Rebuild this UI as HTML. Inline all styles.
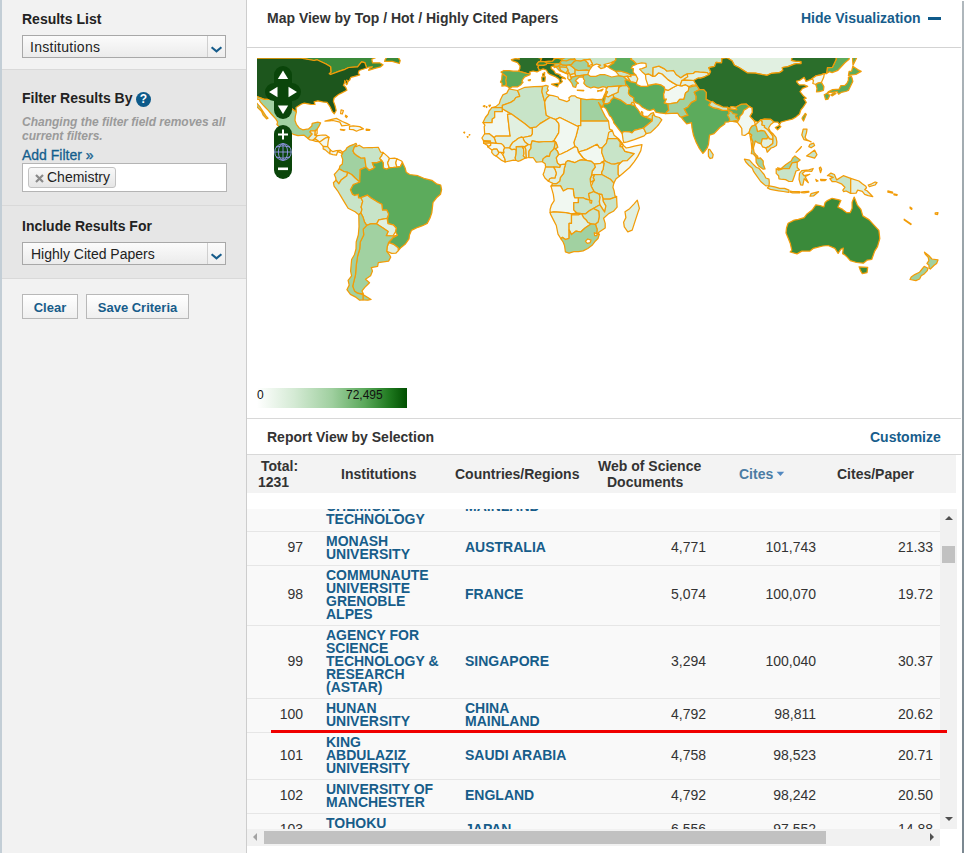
<!DOCTYPE html>
<html><head><meta charset="utf-8">
<style>
*{box-sizing:border-box;margin:0;padding:0}
html,body{width:964px;height:853px;overflow:hidden;background:#fff;font-family:"Liberation Sans",sans-serif;color:#333}
.a{position:absolute}
#side{position:absolute;left:0;top:0;width:247px;height:853px;background:#f2f2f2;border-right:1px solid #cdcdcd}
.lb{position:absolute;left:0;top:0;width:2px;height:853px;background:#c3ced6}
.sec{position:absolute;left:2px;width:244px;background:#e6e6e6}
.h{position:absolute;left:22px;font-weight:bold;font-size:14px;line-height:16px;color:#222;white-space:nowrap}
.sel{position:absolute;left:22px;width:204px;height:23px;border:1px solid #a8a8a8;background:linear-gradient(#fbfbfb,#ebebeb)}
.sel span{position:absolute;left:8px;top:3px;font-size:14px;line-height:16px;color:#222;white-space:nowrap}
.sel i{position:absolute;left:184px;top:0;width:18px;height:21px;border-left:1px solid #cfcfcf;background:linear-gradient(#fbfbfb,#eeeeee)}
.sel i svg{position:absolute;left:2px;top:9px}
.btn{position:absolute;top:294px;height:25px;border:1px solid #b8b8b8;background:linear-gradient(#ffffff,#efefef);font-size:13px;font-weight:bold;color:#175c8a;text-align:center;line-height:24px;padding-top:1px}
.lnk{position:absolute;color:#175d8c;font-weight:bold;font-size:14px;line-height:16px;white-space:nowrap}
.t1{position:absolute;font-weight:bold;font-size:14px;line-height:16px;color:#333;white-space:nowrap}
#map{position:absolute;left:257px;top:58px;width:700px;height:350px;overflow:hidden}
#map svg.m path{stroke:#f29c08;stroke-width:1.25;stroke-linejoin:round}
#body{position:absolute;left:247px;top:509px;width:693px;height:320px;overflow:hidden}
.row{position:absolute;left:0;width:693px;background:#f9f9f9;border-bottom:1px solid #e6e6e6}
.c{position:absolute;top:-1px;bottom:1px;display:flex;align-items:center;white-space:nowrap}
.ci{font-weight:bold;font-size:14px;line-height:13px;color:#175d8a}
.cr{font-size:14px;line-height:16px;color:#333;text-align:right;margin-top:-1px}
.hd{position:absolute;font-weight:bold;font-size:14px;line-height:16px;color:#333;white-space:nowrap}
</style></head><body>
<div id="side">
  <div class="lb"></div>
  <div class="h" style="top:11px">Results List</div>
  <div class="sel" style="top:35px"><span style="left:7px;letter-spacing:0.28px">Institutions</span><i><svg width="13" height="8" viewBox="0 0 13 8"><path d="M1.6 2.2 L6.5 6.3 L11.4 2.2" fill="none" stroke="#165c8b" stroke-width="2.1"/></svg></i></div>
  <div class="sec" style="top:69px;height:137px;border-top:1px solid #d9d9d9;border-bottom:1px solid #d9d9d9"></div>
  <div class="h" style="top:90px">Filter Results By</div>
  <div class="a" style="left:136px;top:92px;width:15px;height:15px;border-radius:50%;background:#0d5a8a;color:#fff;font-weight:bold;font-size:12px;line-height:15px;text-align:center">?</div>
  <div class="a" style="left:22px;top:115px;font-style:italic;font-weight:bold;font-size:12px;line-height:14px;color:#9a9a9a;white-space:nowrap">Changing the filter field removes all<br>current filters.</div>
  <div class="a" style="left:22px;top:147px;font-size:14px;line-height:16px;color:#145e8d;-webkit-text-stroke:0.3px #145e8d;white-space:nowrap">Add Filter »</div>
  <div class="a" style="left:22px;top:163px;width:205px;height:29px;background:#fff;border:1px solid #b4b4b4"></div>
  <div class="a" style="left:28px;top:167px;width:88px;height:21px;border:1px solid #c2c2c2;border-radius:3px;background:linear-gradient(#f8f8f8,#e6e6e6)"></div>
  <svg class="a" style="left:35px;top:173.5px" width="9" height="9" viewBox="0 0 9 9"><path d="M1 1L8 8M8 1L1 8" stroke="#8a8a8a" stroke-width="2.2"/></svg>
  <div class="a" style="left:47px;top:169px;font-size:14px;line-height:16px;color:#222">Chemistry</div>
  <div class="sec" style="top:206px;height:73px;border-bottom:1px solid #d9d9d9"></div>
  <div class="h" style="top:218px">Include Results For</div>
  <div class="sel" style="top:242px"><span>Highly Cited Papers</span><i><svg width="13" height="8" viewBox="0 0 13 8"><path d="M1.6 2.2 L6.5 6.3 L11.4 2.2" fill="none" stroke="#165c8b" stroke-width="2.1"/></svg></i></div>
  <div class="btn" style="left:22px;width:56px">Clear</div>
  <div class="btn" style="left:86px;width:103px">Save Criteria</div>
</div>

<div class="a" style="left:962px;top:1px;width:2px;height:852px;background:linear-gradient(#b0b8bd,#95a0a6 35%,#7b8891 85%,#7b8891)"></div>
<div class="t1" style="left:267px;top:10px">Map View by Top / Hot / Highly Cited Papers</div>
<div class="lnk" style="left:801px;top:10px">Hide Visualization</div>
<div class="a" style="left:928px;top:17px;width:13px;height:3px;background:#0f5a8a"></div>
<div class="a" style="left:247px;top:47px;width:714px;height:1px;background:#d3d3d3"></div>

<div id="map">
<svg class="m" width="700" height="350" viewBox="257 58 700 350" style="position:absolute;left:0;top:0">
<path fill="#3a8a3a" d="M229.4 58.2L236.4 58.2L301.1 58.2L314.1 60.5L316.9 59.8L326.0 64.0L330.6 66.8L330.9 72.1L329.2 73.8L330.6 74.5L338.8 71.4L345.0 69.3L348.8 67.5L357.6 66.8L361.6 61.9L364.8 62.6L366.7 68.0L369.0 67.0L372.5 66.8L369.5 68.4L368.6 70.3L374.8 68.4L380.7 66.8L383.0 64.7L379.5 62.8L372.5 62.8L371.8 59.3L380.7 55.4L387.6 52.4L392.3 48.9L229.4 48.9Z"/>
<path fill="#3a8a3a" d="M384.6 61.4L392.3 61.4L399.3 63.5L400.2 60.5L398.1 57.2L393.5 55.8L392.3 52.1L388.8 54.7L385.3 59.3Z"/>
<path fill="#1d561d" d="M232.4 59.6L234.1 64.5L233.8 72.1L233.6 78.2L236.4 83.8L237.8 85.6L242.0 91.7L246.9 93.1L250.1 96.6L255.7 96.1L264.3 99.4L270.8 99.4L274.8 98.2L279.4 103.3L282.9 104.7L286.6 102.9L291.1 108.2L296.4 111.9L296.0 107.5L301.5 104.0L304.3 103.1L310.8 104.3L315.0 104.5L314.1 101.9L317.8 100.8L322.7 101.9L327.1 102.4L330.2 107.0L332.5 111.9L334.3 113.8L336.2 110.5L335.0 105.6L333.4 101.2L334.1 98.0L338.5 94.5L341.3 93.1L346.9 90.3L345.7 87.3L344.8 86.3L343.4 85.4L344.4 83.3L344.8 80.5L345.7 82.4L346.4 84.7L347.4 83.8L347.8 81.9L346.7 80.1L348.3 81.4L349.9 79.8L350.4 78.2L350.9 77.3L357.4 75.6L359.7 74.9L358.3 73.1L359.2 70.5L366.7 68.0L364.8 62.6L361.6 61.9L357.6 66.8L348.8 67.5L345.0 69.3L338.8 71.4L330.6 74.5L329.2 73.8L330.9 72.1L330.6 66.8L326.0 64.0L316.9 59.8L314.1 60.5L301.1 58.2L236.4 58.2L229.4 57.0L229.4 59.6Z"/>
<path fill="#a1d1a1" d="M250.1 96.6L255.7 96.1L264.3 99.4L270.8 99.4L274.8 98.2L279.4 103.3L282.9 104.7L286.6 102.9L291.1 108.2L296.4 111.9L295.3 116.4L295.0 120.5L296.4 124.3L299.2 128.0L302.7 129.8L308.5 128.9L311.8 126.1L312.2 123.3L317.8 122.2L320.6 122.9L319.0 126.1L317.1 129.2L315.3 130.8L311.1 130.8L309.9 131.9L312.2 134.0L308.1 138.5L304.1 135.2L298.0 135.7L293.4 134.3L286.2 131.0L279.9 127.5L276.9 124.5L277.6 121.9L275.9 119.1L271.3 114.0L268.0 110.1L265.2 107.3L262.9 104.9L260.1 101.7L259.4 99.6L255.7 98.7L256.2 102.4L260.1 107.0L263.1 111.7L265.9 115.9L268.0 118.2L266.6 118.9L263.1 115.0L261.5 111.2L257.3 107.3L255.0 103.6L251.0 98.9Z"/>
<path fill="#e1f0e1" d="M308.1 138.5L312.2 134.0L309.9 131.9L311.1 130.8L315.3 130.8L315.0 135.2L317.4 135.7L314.8 138.7L312.9 140.3L309.9 139.9Z"/>
<path fill="#f1f8f1" d="M315.3 130.8L317.1 129.2L317.1 133.8L315.0 135.2Z"/>
<path fill="#f1f8f1" d="M314.8 138.7L317.4 135.7L322.5 135.0L326.0 135.2L329.0 137.3L325.5 138.0L320.8 141.3L319.0 141.7L316.7 139.9Z"/>
<path fill="#e1f0e1" d="M312.9 140.3L314.8 138.7L316.7 139.9L319.0 141.7L315.7 141.3Z"/>
<path fill="#f1f8f1" d="M319.0 141.7L320.8 141.3L325.5 138.0L329.0 137.3L328.1 141.9L327.6 146.6L323.2 146.4L320.2 143.1Z"/>
<path fill="#e1f0e1" d="M323.2 146.4L327.6 146.6L330.4 149.9L329.7 153.6L328.1 152.4L325.3 149.9L323.2 148.9Z"/>
<path fill="#f1f8f1" d="M330.4 149.9L332.9 151.7L336.4 150.6L340.2 150.3L342.7 152.2L342.5 153.8L341.1 152.9L337.6 151.7L336.4 155.2L332.9 154.7L329.7 153.6Z"/>
<path fill="#f1f8f1" d="M325.0 121.2L331.8 119.4L336.4 118.4L342.3 121.5L346.7 123.3L349.9 125.0L341.8 125.9L339.9 122.2L332.9 120.5L329.5 121.0Z"/>
<path fill="#f1f8f1" d="M349.5 126.4L353.2 125.9L359.7 126.6L363.4 128.9L359.7 129.8L356.5 131.2L353.2 129.6L349.5 129.4Z"/>
<path fill="#f1f8f1" d="M340.4 129.4L345.0 129.8L343.9 130.5L340.6 129.8Z"/>
<path fill="#f1f8f1" d="M366.2 129.2L369.9 129.6L369.5 130.3L366.2 130.3Z"/>
<path fill="#ffffff" d="M341.1 109.8L343.4 110.5L342.3 114.0L340.6 113.6Z"/>
<path fill="#ffffff" d="M345.7 115.2L347.4 116.4L346.4 117.5L345.3 116.4Z"/>
<path fill="#a1d1a1" d="M342.5 153.8L342.7 152.2L345.7 150.1L346.9 147.8L349.9 145.9L353.9 144.3L356.0 143.3L356.7 144.7L354.6 146.4L353.0 151.0L354.4 153.6L357.4 155.9L360.9 158.0L364.8 157.8L365.5 163.4L366.0 167.1L360.2 169.6L360.2 172.7L359.7 182.0L355.1 178.0L351.6 174.5L347.6 172.4L343.4 171.3L339.2 168.9L339.9 166.1L342.3 164.1L342.7 159.4L341.3 155.4Z"/>
<path fill="#c8e4c8" d="M354.6 146.4L356.0 146.6L359.2 145.2L363.2 147.8L369.0 147.5L373.0 147.5L378.3 147.3L380.7 152.2L383.0 152.4L381.6 155.9L379.7 158.5L381.4 160.1L380.0 161.7L376.5 162.9L372.3 162.7L373.7 166.4L375.1 167.1L372.7 168.9L369.0 170.3L366.0 167.1L365.5 163.4L364.8 157.8L360.9 158.0L357.4 155.9L354.4 153.6L353.0 151.0Z"/>
<path fill="#f1f8f1" d="M383.0 152.4L381.6 155.9L379.7 158.5L381.4 160.1L383.2 162.9L383.4 168.0L386.5 169.2L389.3 167.8L387.6 162.9L389.5 158.5L387.6 156.4Z"/>
<path fill="#f1f8f1" d="M389.5 158.5L394.6 158.2L396.9 158.9L395.8 162.9L396.9 167.1L392.5 167.5L389.3 167.8L387.6 162.9Z"/>
<path fill="#ffffff" d="M396.9 158.9L401.6 161.0L402.5 162.4L400.4 166.6L396.9 167.1L395.8 162.9Z"/>
<path fill="#5cab5c" d="M402.5 162.4L405.1 168.0L406.2 172.2L409.7 174.5L417.9 175.7L424.9 178.7L431.8 180.3L436.5 183.8L440.7 185.0L441.6 189.7L440.5 194.3L436.5 197.8L433.0 202.5L431.8 212.9L430.2 217.6L427.2 223.4L422.5 225.7L417.9 227.3L411.4 230.4L409.5 235.0L409.0 238.8L405.1 244.3L401.1 247.4L398.3 250.6L398.1 247.8L393.5 244.3L388.6 242.5L392.8 237.8L397.4 235.3L395.5 231.8L396.2 228.0L393.2 224.8L387.9 223.6L387.6 218.7L388.6 214.1L386.7 210.1L382.5 210.1L381.8 204.3L378.3 202.5L370.6 197.8L367.6 195.2L360.9 197.6L358.5 197.8L358.3 194.3L354.6 195.5L352.3 194.1L350.4 189.7L353.2 184.5L359.7 182.0L360.2 172.7L360.2 169.6L366.0 167.1L369.0 170.3L372.7 168.9L375.1 167.1L373.7 166.4L372.3 162.7L376.5 162.9L380.0 161.7L381.4 160.1L383.2 162.9L383.4 168.0L386.5 169.2L389.3 167.8L392.5 167.5L396.9 167.1L400.4 166.6Z"/>
<path fill="#c8e4c8" d="M347.6 172.4L343.4 171.3L339.2 168.9L336.4 172.2L334.3 174.5L335.7 177.8L336.0 180.1L338.8 183.8L341.1 180.1L346.9 175.7Z"/>
<path fill="#c8e4c8" d="M336.0 180.1L333.4 182.7L334.1 186.2L337.6 190.8L341.1 196.6L345.3 203.6L348.1 208.3L355.1 211.8L358.8 214.8L360.9 212.9L362.0 209.4L361.1 207.1L362.7 201.3L360.9 197.6L358.5 197.8L358.3 194.3L354.6 195.5L352.3 194.1L350.4 189.7L353.2 184.5L359.7 182.0L355.1 178.0L351.6 174.5L347.6 172.4L346.9 175.7L341.1 180.1L338.8 183.8Z"/>
<path fill="#c8e4c8" d="M360.9 197.6L362.7 201.3L361.1 207.1L362.0 209.4L360.9 212.9L363.2 217.6L364.4 221.8L366.7 225.3L371.3 223.6L376.7 223.9L378.8 219.9L387.2 218.3L388.6 214.1L386.7 210.1L382.5 210.1L381.8 204.3L378.3 202.5L370.6 197.8L367.6 195.2Z"/>
<path fill="#e1f0e1" d="M376.7 223.9L378.8 219.9L387.2 218.3L387.9 223.6L393.2 224.8L396.2 228.0L395.5 231.8L392.8 236.0L386.2 235.7L388.1 231.5L383.0 228.0Z"/>
<path fill="#e1f0e1" d="M388.6 242.5L393.5 244.3L398.1 247.8L398.3 250.6L395.8 253.2L391.8 253.4L386.7 251.3L387.2 246.7Z"/>
<path fill="#a1d1a1" d="M366.7 225.3L371.3 223.6L376.7 223.9L383.0 228.0L388.1 231.5L386.2 235.7L392.8 236.0L397.4 235.3L392.8 237.8L388.6 242.5L387.2 246.7L386.7 251.3L389.5 254.8L390.7 257.1L388.6 261.1L378.3 262.7L377.6 266.4L371.3 267.6L372.5 271.1L370.6 275.8L365.5 279.2L369.5 282.7L364.8 287.4L362.0 290.9L363.4 293.9L357.4 293.2L354.4 290.9L352.7 286.2L355.5 274.6L356.2 265.3L357.6 256.0L359.7 249.0L360.2 242.0L363.7 235.0L363.2 229.2Z"/>
<path fill="#a1d1a1" d="M363.0 294.6L371.1 299.5L367.9 300.2L363.0 300.0Z"/>
<path fill="#a1d1a1" d="M358.8 214.8L359.0 226.9L358.3 235.0L356.2 242.0L356.0 249.0L354.4 254.8L351.6 259.5L351.1 265.3L350.6 271.1L351.6 275.8L348.1 280.4L349.2 285.1L346.9 289.7L350.4 294.4L356.2 297.4L359.7 300.2L363.0 300.0L363.0 294.6L357.4 293.2L354.4 290.9L352.7 286.2L355.5 274.6L356.2 265.3L357.6 256.0L359.7 249.0L360.2 242.0L363.7 235.0L363.2 229.2L366.7 225.3L364.4 221.8L363.2 217.6L360.9 212.9Z"/>
<path fill="#2b6e2b" d="M511.4 59.6L515.6 58.6L519.3 59.1L518.2 56.5L523.1 57.0L526.3 53.8L528.4 53.3L532.4 56.1L536.3 57.0L541.7 58.2L540.3 61.4L538.4 62.1L536.6 64.7L538.9 65.4L538.0 67.3L538.9 69.3L540.1 70.3L537.0 71.9L533.1 71.0L529.8 71.9L530.0 73.5L526.6 73.3L518.4 71.2L519.8 68.6L520.0 65.9L517.5 62.6L512.1 60.7Z"/>
<path fill="#2b6e2b" d="M542.6 75.9L544.5 75.9L544.7 72.4L542.6 74.0Z"/>
<path fill="#1d561d" d="M536.3 57.0L541.7 58.2L540.3 61.4L544.7 61.7L552.6 61.2L554.7 58.6L550.8 55.2L557.0 53.5L557.0 48.9L536.6 48.9Z"/>
<path fill="#3a8a3a" d="M536.6 64.7L538.4 62.1L540.3 61.4L544.7 61.7L547.0 63.1L546.1 64.7L543.5 65.4L538.9 65.4Z"/>
<path fill="#3a8a3a" d="M544.7 61.7L547.0 63.1L551.5 63.5L554.5 64.0L559.8 63.5L561.0 61.2L562.4 60.5L561.9 59.1L557.5 58.2L554.7 58.6L552.6 61.2Z"/>
<path fill="#5cab5c" d="M550.8 55.2L554.7 58.6L557.5 58.2L561.9 59.1L566.3 57.0L562.2 54.7L557.0 53.5Z"/>
<path fill="#a1d1a1" d="M561.9 59.1L562.4 60.5L566.3 61.0L570.3 59.3L575.0 59.6L574.3 57.7L566.3 57.0Z"/>
<path fill="#5cab5c" d="M557.0 53.5L562.2 54.7L566.3 57.0L574.3 57.7L577.3 54.7L578.4 48.9L557.0 48.9Z"/>
<path fill="#c8e4c8" d="M574.3 57.7L575.0 59.6L575.9 60.5L580.5 61.2L584.5 59.8L590.1 59.3L592.4 64.0L591.7 66.6L593.6 65.2L596.6 64.0L600.6 65.2L598.2 66.6L600.8 68.6L605.2 67.3L604.0 65.9L607.8 66.6L604.0 64.5L611.5 62.6L615.7 60.5L615.7 56.8L611.0 48.9L577.3 48.9L577.3 54.7Z"/>
<path fill="#a1d1a1" d="M559.8 63.5L561.0 61.2L562.4 60.5L566.3 61.0L570.3 59.3L575.0 59.6L575.9 60.5L573.8 61.9L571.5 64.7L569.8 64.9L566.3 65.4L562.6 65.2Z"/>
<path fill="#a1d1a1" d="M554.5 64.0L559.8 63.5L561.2 64.2L558.2 66.3L554.2 66.3Z"/>
<path fill="#a1d1a1" d="M554.2 66.3L558.2 66.3L561.2 64.2L562.6 65.2L566.3 65.4L566.8 67.5L559.4 67.0L560.8 70.3L563.8 72.1L565.6 73.3L563.6 72.4L559.8 71.0L557.5 68.6L556.3 67.0L554.2 67.7Z"/>
<path fill="#c8e4c8" d="M559.4 67.0L566.8 67.5L568.2 69.8L565.6 73.3L563.8 72.1L560.8 70.3Z"/>
<path fill="#c8e4c8" d="M566.3 65.4L569.8 64.9L572.6 67.0L575.2 69.3L575.0 73.5L570.5 74.7L568.2 73.1L568.2 69.8L566.8 67.5Z"/>
<path fill="#e1f0e1" d="M565.6 73.3L568.2 73.1L569.4 73.1L567.5 74.0Z"/>
<path fill="#e1f0e1" d="M567.5 74.0L569.4 73.1L570.5 76.6L571.5 78.7L569.4 80.1L567.7 78.4L568.0 74.9Z"/>
<path fill="#e1f0e1" d="M570.5 76.6L570.5 74.7L575.0 73.5L575.9 76.1L571.5 77.0Z"/>
<path fill="#c8e4c8" d="M575.0 73.5L575.2 69.3L578.4 70.5L586.6 69.8L589.2 70.5L587.8 74.5L583.8 75.2L575.9 76.1Z"/>
<path fill="#a1d1a1" d="M569.8 64.9L571.5 64.7L573.8 61.9L575.9 60.5L580.5 61.2L584.5 59.8L588.2 63.1L588.2 66.3L591.7 67.0L589.2 70.5L586.6 69.8L578.4 70.5L575.2 69.3L572.6 67.0Z"/>
<path fill="#e1f0e1" d="M584.5 59.8L590.1 59.3L592.4 64.0L588.2 66.3L588.2 63.1Z"/>
<path fill="#a1d1a1" d="M569.4 80.1L571.7 83.1L573.1 86.6L575.7 87.3L576.6 84.0L578.4 83.3L575.4 80.7L577.3 78.7L579.4 77.0L583.3 77.0L583.8 75.2L575.9 76.1L571.5 77.3L571.5 78.7Z"/>
<path fill="#a1d1a1" d="M577.3 90.1L583.8 90.3L583.6 90.8L577.5 90.5Z"/>
<path fill="#5cab5c" d="M518.4 71.2L526.6 73.3L530.0 73.5L530.0 74.7L524.7 76.8L522.6 79.6L521.9 81.9L523.1 82.1L521.0 84.7L517.7 86.8L512.4 86.8L509.6 88.4L507.7 86.6L505.4 85.6L506.3 83.8L505.6 80.3L506.5 76.8L503.5 74.5L502.1 73.1L501.0 72.1L504.0 70.5L509.1 70.7L513.3 71.2Z"/>
<path fill="#5cab5c" d="M528.2 80.1L530.5 79.6L530.0 80.7L528.7 80.7Z"/>
<path fill="#5cab5c" d="M505.4 85.6L501.9 86.1L502.1 83.1L500.5 82.1L501.7 79.6L501.9 76.8L502.1 74.5L503.5 74.5L506.5 76.8L505.6 80.3L506.3 83.8Z"/>
<path fill="#2b6e2b" d="M540.1 70.3L543.1 68.9L546.3 70.0L548.2 73.3L550.5 74.7L554.7 76.3L558.9 78.9L559.8 81.7L559.1 84.0L561.2 82.8L562.4 81.4L561.0 79.6L562.2 78.0L565.6 78.9L564.5 77.7L559.8 75.6L560.1 74.7L555.4 73.3L554.2 71.0L551.2 68.6L551.2 66.6L554.5 65.9L554.5 64.0L551.5 63.5L547.0 63.1L546.1 64.7L543.5 65.4L538.9 65.4L538.0 67.3L538.9 69.3Z"/>
<path fill="#2b6e2b" d="M551.5 84.2L558.9 83.1L557.7 86.8L552.4 84.7Z"/>
<path fill="#2b6e2b" d="M542.1 81.4L544.9 81.2L545.4 76.8L541.7 77.0Z"/>
<path fill="#a1d1a1" d="M583.1 77.3L583.8 75.2L587.8 74.5L590.3 76.3L595.9 76.3L600.3 74.5L604.5 74.5L611.7 77.0L619.2 75.6L623.8 76.6L626.8 79.8L625.9 83.8L626.8 85.6L621.3 85.9L611.0 86.6L608.0 86.6L606.8 88.4L605.9 87.3L603.1 86.6L598.2 88.2L593.8 86.8L590.8 88.0L586.4 86.1L583.8 83.3L584.7 80.3L583.6 79.1Z"/>
<path fill="#c8e4c8" d="M597.8 91.5L603.1 89.1L601.7 90.8L597.8 90.5Z"/>
<path fill="#c8e4c8" d="M615.4 71.2L619.2 75.6L623.8 76.6L631.0 76.6L630.6 74.7L626.8 72.8L620.3 71.0Z"/>
<path fill="#e1f0e1" d="M623.8 76.6L627.3 76.1L630.8 81.9L626.8 79.8Z"/>
<path fill="#e1f0e1" d="M627.3 76.1L631.0 76.6L630.6 74.7L635.7 74.9L637.8 78.7L636.4 82.8L630.8 81.9Z"/>
<path fill="#5cab5c" d="M607.8 66.6L609.9 68.2L615.4 71.2L620.3 71.0L626.8 72.8L630.6 74.7L635.7 74.9L633.1 72.1L633.4 68.6L631.3 68.4L632.4 65.9L635.5 64.7L636.6 64.0L633.1 60.5L630.8 59.3L632.0 57.5L634.3 55.8L634.3 48.9L615.7 48.9L615.7 56.8L615.7 60.5L611.5 62.6L614.1 62.6Z"/>
<path fill="#5cab5c" d="M826.5 73.5L827.4 67.7L832.3 67.5L836.0 59.8L836.7 48.9L850.7 48.9L849.5 53.5L849.1 59.3L844.9 62.8L837.9 70.3L832.1 72.6L829.3 71.7Z"/>
<path fill="#5cab5c" d="M853.0 65.2L856.5 58.2L855.4 48.9L853.0 48.9L852.6 59.3Z"/>
<path fill="#5cab5c" d="M725.7 57.9L726.9 57.7L727.4 48.9L725.7 48.9Z"/>
<path fill="#c8e4c8" d="M508.9 88.9L517.5 90.5L518.6 92.8L519.8 96.3L515.9 97.5L514.0 100.3L510.7 102.4L502.4 105.4L502.4 107.7L491.9 107.7L495.8 106.6L499.3 103.6L500.3 100.1L502.8 94.9L506.8 93.1L508.6 89.6Z"/>
<path fill="#c8e4c8" d="M491.9 107.7L502.4 107.7L502.4 111.7L494.7 111.7L494.7 117.5L492.3 119.1L492.1 122.6L483.0 122.6L485.4 117.5L488.2 114.0L489.1 111.0Z"/>
<path fill="#f1f8f1" d="M483.0 122.6L492.1 122.6L492.3 119.1L494.7 117.5L494.7 111.7L502.4 111.7L502.4 108.7L511.4 114.0L507.5 114.3L509.8 133.8L510.3 136.1L495.8 136.1L494.2 137.8L488.9 133.6L484.7 134.0L484.2 126.8L484.9 125.2Z"/>
<path fill="#c8e4c8" d="M517.5 90.5L524.9 87.3L534.2 86.6L542.6 86.3L541.9 91.7L543.5 97.7L544.7 101.9L545.6 110.5L546.3 115.2L550.3 117.5L540.1 123.6L536.1 127.1L532.4 127.5L530.3 128.2L525.2 124.0L511.4 114.0L502.4 108.7L502.4 105.4L510.7 102.4L514.0 100.3L515.9 97.5L519.8 96.3L518.6 92.8Z"/>
<path fill="#c8e4c8" d="M542.6 86.3L545.9 85.4L548.2 86.1L547.3 88.9L548.4 90.3L546.3 92.4L546.8 94.0L549.4 95.2L546.3 98.4L544.7 101.9L543.5 97.7L541.9 91.7Z"/>
<path fill="#e1f0e1" d="M549.4 95.2L552.9 95.6L558.0 97.0L559.1 99.1L563.3 100.3L566.8 101.7L569.4 100.1L568.9 97.7L571.2 95.9L575.0 95.9L576.6 97.3L580.8 98.7L580.8 121.0L580.8 125.7L578.4 125.7L578.4 126.8L559.8 117.5L555.6 119.6L550.3 117.5L546.3 115.2L545.6 110.5L544.7 101.9L546.3 98.4Z"/>
<path fill="#a1d1a1" d="M580.8 98.7L586.6 99.6L592.4 99.1L597.1 99.6L602.2 99.4L603.8 103.6L602.2 107.5L598.5 102.6L601.5 108.9L605.2 116.4L608.5 121.0L595.4 121.0L580.8 121.0Z"/>
<path fill="#e1f0e1" d="M580.8 121.0L608.5 121.0L609.6 129.2L612.2 130.3L607.5 138.9L606.4 143.1L602.2 147.8L599.4 147.8L597.1 144.3L586.6 149.6L578.4 152.0L577.3 147.8L575.0 146.6L573.8 142.6L576.1 135.9L578.4 126.8L578.4 125.7L580.8 125.7Z"/>
<path fill="#f1f8f1" d="M578.4 152.0L586.6 149.6L597.1 144.3L599.4 147.8L602.2 147.8L601.7 152.4L604.7 160.6L601.7 162.4L600.6 163.4L596.6 163.8L594.3 164.1L591.2 161.3L586.4 160.3L583.1 158.0Z"/>
<path fill="#e1f0e1" d="M511.4 114.0L525.2 124.0L530.3 128.2L532.4 127.5L532.4 133.8L531.0 135.9L523.1 137.5L521.4 137.1L517.9 138.5L515.6 140.6L512.6 142.6L510.3 146.1L509.8 148.0L508.2 147.8L504.7 148.0L503.3 145.4L501.2 143.6L496.1 143.3L494.2 137.8L495.8 136.1L510.3 136.1L509.8 133.8L507.5 114.3Z"/>
<path fill="#e1f0e1" d="M523.1 137.5L531.0 135.9L532.4 133.8L532.4 127.5L536.1 127.1L540.1 123.6L550.3 117.5L555.6 119.6L558.7 123.3L559.1 125.7L558.7 132.9L554.2 140.3L551.7 141.7L545.9 141.5L538.9 142.2L532.1 140.8L531.0 145.0L528.2 144.5L524.9 141.9L523.5 139.6Z"/>
<path fill="#f1f8f1" d="M555.6 119.6L559.8 117.5L578.4 126.8L576.1 135.9L573.8 142.6L575.0 146.6L573.1 147.8L567.0 151.3L566.3 151.5L561.2 154.0L558.7 154.7L557.5 151.3L555.2 148.9L557.7 147.3L556.3 143.1L554.2 140.3L558.7 132.9L559.1 125.7L558.7 123.3Z"/>
<path fill="#e1f0e1" d="M481.9 138.0L484.2 134.5L484.7 134.0L488.9 133.6L494.2 137.8L496.1 143.3L490.7 142.9L483.7 143.3L483.5 140.6Z"/>
<path fill="#f1f8f1" d="M483.5 140.6L490.5 140.8L490.5 141.5L483.7 141.5Z"/>
<path fill="#f1f8f1" d="M483.7 143.3L490.7 142.9L490.7 145.4L487.7 146.8L487.5 145.4Z"/>
<path fill="#f1f8f1" d="M487.7 146.8L490.7 145.4L490.7 142.9L496.1 143.3L501.2 143.6L503.3 145.4L504.7 148.0L503.5 150.1L504.0 152.4L500.5 152.4L498.6 152.4L497.0 149.2L493.5 149.2L491.9 150.1Z"/>
<path fill="#e1f0e1" d="M491.9 150.1L493.5 149.2L497.0 149.2L498.6 152.4L498.6 153.6L496.1 156.1L493.5 154.7L491.7 152.4Z"/>
<path fill="#f1f8f1" d="M496.1 156.1L498.6 153.6L498.6 152.4L500.5 152.4L502.8 154.5L504.0 157.1L505.1 159.4L505.1 162.0L501.2 160.1Z"/>
<path fill="#e1f0e1" d="M505.1 162.0L505.1 159.4L504.0 157.1L502.8 154.5L504.0 152.4L503.5 150.1L504.7 148.0L508.2 147.8L509.8 148.0L511.7 149.6L514.2 149.2L516.3 149.9L516.1 153.8L515.2 157.8L515.9 160.3L513.3 160.1Z"/>
<path fill="#c8e4c8" d="M515.9 160.3L515.2 157.8L516.1 153.8L516.3 149.9L516.1 146.6L522.4 146.4L522.6 147.5L523.5 148.5L524.0 153.6L523.3 155.9L525.4 158.0L520.3 160.6L517.9 161.3Z"/>
<path fill="#e1f0e1" d="M525.4 158.0L523.3 155.9L524.0 153.6L523.5 148.5L522.6 147.5L522.4 146.4L524.7 146.6L525.9 149.4L526.3 157.8Z"/>
<path fill="#e1f0e1" d="M526.3 157.8L528.9 157.5L528.9 151.3L531.0 148.2L531.0 145.0L528.2 144.5L525.9 145.9L524.7 146.6L525.9 149.4Z"/>
<path fill="#e1f0e1" d="M509.8 148.0L510.3 146.1L512.6 142.6L515.6 140.6L517.9 138.5L521.4 137.1L523.1 137.5L523.5 139.6L524.9 141.9L528.2 144.5L525.9 145.9L524.7 146.6L522.4 146.4L516.1 146.6L516.3 149.9L514.2 149.2L511.7 149.6Z"/>
<path fill="#c8e4c8" d="M528.9 157.5L533.1 157.5L536.3 162.2L538.9 162.0L542.4 161.7L543.1 158.9L545.2 157.1L547.0 156.1L549.4 156.4L550.5 152.4L554.0 148.9L555.2 143.1L555.2 141.7L551.7 141.7L545.9 141.5L538.9 142.2L532.1 140.8L531.0 145.0L531.0 148.2L528.9 151.3Z"/>
<path fill="#c8e4c8" d="M542.4 161.7L545.2 163.8L545.6 166.8L548.9 167.1L553.5 167.1L556.3 167.1L559.8 167.5L560.3 165.2L557.5 162.9L556.3 157.8L558.7 154.7L557.5 151.3L555.2 148.9L557.7 147.3L556.3 143.1L555.6 141.9L555.2 143.1L554.0 148.9L550.5 152.4L549.4 156.4L547.0 156.1L545.2 157.1L543.1 158.9Z"/>
<path fill="#f1f8f1" d="M558.7 154.7L556.3 157.8L557.5 162.9L560.3 165.2L561.0 164.5L565.6 164.1L565.9 162.2L568.0 160.6L574.7 162.7L579.4 160.3L581.5 159.9L586.4 160.3L583.1 158.0L578.4 152.0L577.3 147.8L575.0 146.6L573.1 147.8L567.0 151.3L566.3 151.5L561.2 154.0Z"/>
<path fill="#e1f0e1" d="M607.5 138.9L608.7 132.6L612.2 130.3L614.1 135.2L618.5 138.7L622.2 143.1L620.3 142.4L617.5 138.7L611.0 138.5Z"/>
<path fill="#f1f8f1" d="M619.9 146.6L622.2 143.1L623.4 145.4L622.2 146.8Z"/>
<path fill="#c8e4c8" d="M607.5 138.9L611.0 138.5L617.5 138.7L620.3 142.4L619.9 146.6L622.2 146.8L625.0 151.3L634.3 153.6L627.3 160.6L622.7 161.0L620.3 162.9L618.0 163.1L614.5 164.1L611.0 163.8L606.4 161.7L604.7 160.6L601.7 152.4L602.2 147.8L606.4 143.1Z"/>
<path fill="#f1f8f1" d="M622.2 146.8L623.4 145.4L626.2 148.0L629.6 147.3L634.3 146.1L642.0 144.7L641.3 147.8L640.8 150.6L637.8 156.4L634.3 161.7L629.6 167.5L622.7 173.4L619.4 176.2L618.0 174.3L618.0 165.7L620.3 162.9L622.7 161.0L627.3 160.6L634.3 153.6L625.0 151.3Z"/>
<path fill="#c8e4c8" d="M619.4 176.2L616.1 178.7L613.8 183.1L610.3 179.2L601.7 174.5L601.6 172.0L603.1 169.2L604.0 163.1L601.7 162.4L604.7 160.6L606.4 161.7L611.0 163.8L614.5 164.1L618.0 163.1L620.3 162.9L618.0 165.7L618.0 174.3Z"/>
<path fill="#e1f0e1" d="M591.5 175.5L594.3 174.5L601.7 174.5L601.6 172.0L603.1 169.2L604.0 163.1L601.7 162.4L600.6 163.4L596.6 163.8L594.3 164.1L595.2 167.1L592.2 171.0Z"/>
<path fill="#c8e4c8" d="M594.3 174.5L601.7 174.5L610.3 179.2L613.8 183.1L612.9 187.3L614.1 190.8L615.0 195.9L616.6 196.6L609.9 199.2L603.1 199.0L601.7 194.3L599.2 194.1L594.7 192.2L594.0 191.5L591.2 186.2L592.9 182.2L594.3 180.1L593.3 177.8Z"/>
<path fill="#c8e4c8" d="M590.1 178.7L591.5 175.5L594.3 174.5L593.3 177.8L594.3 180.1L590.5 182.4Z"/>
<path fill="#c8e4c8" d="M551.0 186.2L552.9 183.4L556.6 183.6L559.6 181.3L560.3 177.6L563.6 173.4L564.3 168.2L565.6 164.1L565.9 162.2L568.0 160.6L574.7 162.7L579.4 160.3L581.5 159.9L586.4 160.3L591.2 161.3L594.3 164.1L595.2 167.1L592.2 171.0L591.5 175.5L590.1 178.7L590.5 182.4L591.2 186.2L594.0 191.5L588.7 193.6L589.4 197.8L590.1 202.9L591.5 203.1L591.9 200.6L585.9 199.2L583.1 197.8L578.4 197.8L574.7 197.8L573.8 195.2L573.3 189.2L568.0 188.5L563.3 191.0L560.5 185.9L553.3 185.9Z"/>
<path fill="#e1f0e1" d="M548.4 181.3L552.9 183.4L556.6 183.6L559.6 181.3L560.3 177.6L563.6 173.4L564.3 168.2L565.6 164.1L561.0 164.5L559.8 167.5L556.3 167.1L553.5 167.1L555.2 169.9L556.3 173.4L554.9 178.0L551.7 177.8L549.6 178.7Z"/>
<path fill="#e1f0e1" d="M545.6 166.8L548.9 167.1L553.5 167.1L555.2 169.9L556.3 173.4L554.9 178.0L551.7 177.8L549.6 178.7L548.4 181.3L544.9 178.0L543.1 174.5L544.2 171.7L544.7 169.9Z"/>
<path fill="#f1f8f1" d="M551.0 186.2L553.3 185.9L560.5 185.9L563.3 191.0L568.0 188.5L573.3 189.2L573.8 195.2L574.7 197.8L578.4 197.8L578.4 202.5L573.8 202.5L573.8 209.9L577.1 213.2L571.5 213.9L565.6 212.7L553.8 211.8L550.1 212.5L550.1 209.4L551.5 204.8L554.2 200.6L553.3 194.3Z"/>
<path fill="#c8e4c8" d="M573.8 202.5L578.4 202.5L578.4 197.8L583.1 197.8L585.9 199.2L591.9 200.6L591.5 203.1L590.1 202.9L589.4 197.8L588.7 193.6L594.0 191.5L594.7 192.2L599.2 194.1L600.1 197.3L599.4 201.3L599.9 204.8L593.3 208.5L589.6 210.6L585.4 213.9L581.5 213.6L577.1 213.2L573.8 209.9Z"/>
<path fill="#e1f0e1" d="M599.2 194.1L601.7 194.3L603.1 199.0L603.3 201.3L605.9 205.9L604.7 212.0L603.1 209.9L599.9 204.8L599.4 201.3L600.1 197.3Z"/>
<path fill="#c8e4c8" d="M616.6 196.6L616.8 201.3L617.1 207.1L613.4 211.3L608.7 213.6L603.6 218.3L605.2 223.4L605.2 228.0L598.5 232.5L599.2 234.6L597.1 233.9L596.8 232.5L597.1 229.2L595.4 224.3L598.2 221.8L599.2 216.4L598.7 211.1L593.3 208.5L599.9 204.8L603.1 209.9L604.7 212.0L605.9 205.9L603.3 201.3L603.1 199.0L609.9 199.2Z"/>
<path fill="#c8e4c8" d="M581.5 213.6L585.4 213.9L589.6 210.6L593.3 208.5L598.7 211.1L599.2 216.4L598.2 221.8L595.4 224.3L591.0 223.9L587.8 222.5L586.1 219.9L583.6 217.8Z"/>
<path fill="#e1f0e1" d="M550.1 212.5L553.8 211.8L565.6 212.7L571.5 213.9L577.1 213.2L581.5 213.6L578.4 214.8L571.5 214.8L571.5 223.4L569.1 223.4L569.1 229.9L569.1 238.3L565.6 239.5L562.2 237.4L561.0 238.8L558.0 234.1L556.3 225.5L553.8 220.6L550.5 214.1Z"/>
<path fill="#e1f0e1" d="M569.1 223.4L571.5 223.4L571.5 214.8L578.4 214.8L581.5 213.6L583.6 217.8L586.1 219.9L587.8 222.5L591.0 223.9L585.4 227.8L583.1 229.7L580.8 232.0L576.1 231.1L571.5 234.6L569.1 229.9Z"/>
<path fill="#a1d1a1" d="M561.0 238.8L562.2 237.4L565.6 239.5L569.1 238.3L569.1 229.9L571.5 234.6L576.1 231.1L580.8 232.0L583.1 229.7L585.4 227.8L591.0 223.9L595.4 224.3L597.1 229.2L596.8 232.5L597.1 233.9L599.2 234.6L598.0 238.5L594.7 241.8L592.4 245.0L587.8 248.5L583.1 250.9L578.4 251.6L573.8 251.6L569.1 253.2L565.4 251.8L565.0 249.0L564.5 245.5L563.1 242.0Z"/>
<path fill="#ffffff" d="M585.4 241.1L587.8 239.0L591.0 240.1L590.1 242.7L587.3 243.4Z"/>
<path fill="#ffffff" d="M594.3 232.7L597.1 233.9L596.8 235.7L594.7 235.7Z"/>
<path fill="#e1f0e1" d="M637.3 200.1L639.4 208.3L637.8 212.9L635.5 219.9L632.2 230.1L627.8 231.8L624.3 226.9L623.6 222.2L625.9 217.6L625.0 211.8L629.6 208.7L634.1 203.8Z"/>
<path fill="#5cab5c" d="M603.1 106.8L605.7 108.2L607.8 111.9L609.6 115.7L611.0 116.8L613.4 121.0L613.8 122.9L616.1 125.7L618.5 128.9L620.3 131.2L622.2 133.6L623.4 131.5L625.0 131.7L629.6 131.9L632.0 132.9L634.3 130.3L643.6 128.0L652.0 121.0L651.1 119.4L642.7 115.7L640.8 114.5L639.2 111.5L637.8 109.4L635.7 107.0L635.2 105.9L630.8 104.5L626.6 104.3L620.3 99.8L613.8 97.3L610.8 100.1L609.9 102.4L607.5 103.6L603.8 103.6Z"/>
<path fill="#e1f0e1" d="M622.2 133.6L623.1 139.9L623.8 142.6L627.3 141.9L634.3 139.6L644.1 135.9L646.2 133.6L643.6 128.0L634.3 130.3L632.0 132.9L629.6 131.9L625.0 131.7L623.4 131.5Z"/>
<path fill="#c8e4c8" d="M643.6 128.0L646.2 133.6L650.6 132.6L655.2 128.2L657.1 126.4L658.7 124.5L661.8 119.8L659.4 117.5L655.2 116.4L653.8 114.3L652.4 115.4L652.0 121.0Z"/>
<path fill="#c8e4c8" d="M642.7 115.7L651.1 119.4L652.0 121.0L652.4 115.4L653.8 114.3L653.6 112.6L651.3 113.3L648.3 116.1L643.6 116.6Z"/>
<path fill="#c8e4c8" d="M640.8 114.5L642.7 115.7L642.7 112.2L641.5 111.5Z"/>
<path fill="#c8e4c8" d="M630.8 104.5L635.2 105.9L634.3 103.6L633.6 102.4L632.0 102.4Z"/>
<path fill="#c8e4c8" d="M612.9 94.5L618.0 92.2L618.7 87.3L621.3 85.9L626.8 85.6L625.7 84.0L627.3 85.4L629.6 88.9L628.7 90.3L628.5 93.1L629.9 95.4L633.8 97.7L633.6 100.1L634.3 101.2L633.6 102.4L632.0 102.4L630.8 104.5L626.6 104.3L620.3 99.8L613.8 97.3Z"/>
<path fill="#e1f0e1" d="M606.1 88.7L606.8 88.4L608.0 86.6L611.0 86.6L621.3 85.9L618.7 87.3L618.0 92.2L612.9 94.5L608.2 97.0L605.9 95.9L606.1 94.5L607.5 91.9L606.1 91.2Z"/>
<path fill="#c8e4c8" d="M604.3 95.2L606.1 94.5L607.5 91.9L606.1 91.2Z"/>
<path fill="#5cab5c" d="M602.4 99.6L603.8 103.6L605.0 98.9L605.4 94.9L604.3 95.2Z"/>
<path fill="#c8e4c8" d="M603.8 103.6L607.5 103.6L609.9 102.4L610.8 100.1L613.8 97.3L612.9 94.5L608.2 97.0L605.4 96.1L605.0 98.9Z"/>
<path fill="#5cab5c" d="M625.0 80.5L626.8 79.8L630.8 81.9L636.4 82.8L636.9 84.7L641.0 86.3L648.0 86.3L648.0 85.4L655.9 83.8L661.1 84.9L664.3 87.0L665.0 89.4L664.3 92.4L663.6 94.2L664.1 98.9L666.4 99.1L664.3 102.9L668.0 103.8L668.7 110.3L666.4 112.2L665.9 113.6L659.7 112.9L655.9 112.2L653.8 109.1L649.9 110.5L647.1 109.8L642.4 107.3L639.2 104.3L635.7 102.6L634.3 101.2L633.6 100.1L633.8 97.7L629.9 95.4L628.5 93.1L628.7 90.3L629.6 88.9L627.3 85.4L625.7 84.0Z"/>
<path fill="#f1f8f1" d="M664.3 102.9L666.4 99.1L664.1 98.9L663.6 94.2L664.3 92.4L665.0 89.4L668.3 90.3L672.5 87.7L677.3 85.2L680.1 85.6L681.8 85.9L685.5 84.7L689.0 86.6L689.0 87.3L688.3 91.0L685.5 93.1L683.9 99.4L679.7 99.4L677.1 102.6L670.6 103.6L668.0 103.8Z"/>
<path fill="#a1d1a1" d="M665.9 113.6L677.6 113.1L679.7 116.4L681.3 117.3L685.5 115.9L688.0 115.4L686.2 112.4L684.3 108.9L687.8 107.3L691.3 102.6L696.0 100.1L696.2 96.6L694.3 92.4L696.2 91.2L699.5 89.6L696.9 85.6L693.6 86.1L689.0 87.3L688.3 91.0L685.5 93.1L683.9 99.4L679.7 99.4L677.1 102.6L670.6 103.6L668.0 103.8L668.7 110.3L666.4 112.2Z"/>
<path fill="#f1f8f1" d="M645.5 74.7L645.9 79.1L648.0 85.4L655.9 83.8L661.1 84.9L664.3 87.0L665.0 89.4L668.3 90.3L672.5 87.7L677.3 85.2L672.7 82.6L668.0 79.6L664.5 76.3L662.2 74.0L658.7 72.8L655.0 76.1L652.7 76.1L648.3 73.8Z"/>
<path fill="#e1f0e1" d="M652.7 76.1L652.9 67.5L659.0 66.1L664.5 68.9L666.9 71.0L673.6 70.5L676.2 74.5L680.8 77.7L683.2 75.9L687.1 73.8L687.8 76.8L692.5 77.3L686.7 79.1L682.0 80.3L680.1 85.6L677.3 85.2L672.7 82.6L668.0 79.6L664.5 76.3L662.2 74.0L658.7 72.8L655.0 76.1Z"/>
<path fill="#c8e4c8" d="M634.3 55.8L632.0 57.5L630.8 59.3L633.1 60.5L636.6 64.0L641.7 62.8L645.9 63.3L646.4 66.8L642.0 68.6L639.6 69.1L642.0 71.7L645.5 74.7L648.3 73.8L652.7 76.1L652.9 67.5L659.0 66.1L664.5 68.9L666.9 71.0L673.6 70.5L676.2 74.5L680.8 77.7L683.2 75.9L687.1 73.8L687.8 73.8L693.6 73.3L695.3 71.7L699.5 72.1L706.9 72.6L709.2 74.5L710.6 71.7L708.8 67.7L714.6 66.3L716.0 62.4L721.6 62.8L722.0 58.4L725.7 57.9L725.7 48.9L634.3 48.9Z"/>
<path fill="#e1f0e1" d="M687.8 73.8L693.6 73.3L695.3 71.7L699.5 72.1L706.9 72.6L709.2 74.5L704.6 76.8L700.6 78.2L698.3 78.0L694.1 80.5L685.5 80.1L683.9 79.1L687.8 76.8L687.1 73.8Z"/>
<path fill="#e1f0e1" d="M680.1 85.6L682.0 80.3L685.5 80.1L694.1 80.5L697.1 85.2L692.5 85.2L689.0 86.6L685.5 84.7L681.8 85.9Z"/>
<path fill="#e1f0e1" d="M726.9 57.7L732.0 60.7L734.4 65.2L739.0 67.5L747.2 72.8L755.3 73.1L766.9 75.4L771.6 73.3L779.5 72.6L782.8 70.5L782.3 67.5L787.9 66.6L794.2 64.2L797.2 63.5L801.1 63.5L801.1 61.7L795.6 61.2L791.4 60.3L792.5 56.3L787.9 55.2L773.9 55.8L750.6 48.9L727.4 48.9Z"/>
<path fill="#2b6e2b" d="M693.6 80.5L696.9 85.6L699.5 89.6L703.6 89.6L706.2 92.4L706.0 99.4L711.1 101.9L712.3 101.5L715.7 104.0L719.2 105.4L722.7 107.0L727.6 107.3L729.5 108.7L731.1 106.6L735.8 107.3L741.3 104.3L746.0 104.0L749.2 106.6L752.0 108.0L752.3 112.2L749.9 116.4L754.1 120.8L758.1 122.4L760.4 120.1L764.6 119.1L770.9 119.4L773.9 121.9L777.9 122.2L779.5 124.7L780.9 122.2L786.7 120.5L792.3 119.1L795.6 117.3L799.5 114.0L800.9 109.8L803.0 107.3L806.3 102.4L803.9 98.9L806.3 98.2L803.0 95.4L800.0 91.7L802.5 88.4L807.7 86.3L804.2 84.9L799.3 84.9L797.2 82.6L796.5 81.2L799.5 80.5L804.2 77.3L806.0 81.4L811.6 79.1L815.8 75.9L820.9 74.9L824.4 73.5L826.5 73.5L827.4 67.7L832.3 67.5L836.0 59.8L836.7 48.9L792.5 48.9L792.5 56.3L791.4 60.3L795.6 61.2L801.1 61.7L801.1 63.5L797.2 63.5L794.2 64.2L787.9 66.6L782.3 67.5L782.8 70.5L779.5 72.6L771.6 73.3L766.9 75.4L755.3 73.1L747.2 72.8L739.0 67.5L734.4 65.2L732.0 60.7L726.9 57.7L725.7 57.9L722.0 58.4L721.6 62.8L716.0 62.4L714.6 66.3L708.8 67.7L710.6 71.7L709.2 74.5L704.6 76.8L700.6 78.2L698.3 78.0Z"/>
<path fill="#2b6e2b" d="M775.3 127.5L777.6 129.8L780.9 126.6L779.5 125.4Z"/>
<path fill="#5cab5c" d="M802.1 118.7L803.5 121.0L806.3 114.5L805.3 113.3L802.3 117.5Z"/>
<path fill="#f1f8f1" d="M811.6 79.1L813.5 80.3L812.8 83.5L815.8 84.5L818.1 83.1L821.4 82.4L823.7 77.3L824.4 73.5L820.9 74.9L815.8 75.9Z"/>
<path fill="#5cab5c" d="M815.8 84.5L817.0 88.4L816.5 91.9L819.3 91.7L823.5 90.3L823.9 86.6L821.4 82.4L818.1 83.1Z"/>
<path fill="#5cab5c" d="M827.2 93.1L829.8 92.4L833.3 92.2L837.2 91.7L838.6 94.2L841.2 92.4L845.6 91.5L848.4 90.5L850.5 86.3L852.8 81.4L852.1 78.2L851.2 76.1L848.4 77.3L848.4 80.3L847.0 83.3L844.9 85.4L840.9 85.6L839.1 89.1L832.6 89.6L828.6 91.5Z"/>
<path fill="#5cab5c" d="M824.2 94.7L827.2 93.3L829.8 95.2L828.1 99.1L825.6 99.6L824.6 96.1Z"/>
<path fill="#5cab5c" d="M830.9 94.7L834.4 92.4L836.0 93.5L832.1 95.9Z"/>
<path fill="#5cab5c" d="M848.4 75.6L851.2 74.9L855.8 74.5L861.2 71.4L857.7 69.6L852.8 66.3L851.6 71.2L849.1 71.4Z"/>
<path fill="#5cab5c" d="M681.3 117.3L683.6 120.3L686.7 123.8L691.5 122.6L692.0 128.0L693.4 135.0L696.0 141.9L699.0 147.8L702.9 153.4L704.6 151.5L707.1 148.2L708.5 144.3L709.5 135.2L714.1 133.6L719.9 127.5L724.8 124.0L725.0 122.2L728.5 121.9L729.7 121.0L736.7 122.2L738.3 121.0L739.5 118.7L739.9 116.4L742.7 113.6L743.9 110.3L746.5 108.7L749.2 106.6L746.0 104.0L741.3 104.3L735.8 107.3L736.7 109.6L729.5 108.7L727.6 107.3L727.8 110.1L722.7 110.3L718.1 108.7L713.4 107.7L709.0 105.2L711.1 101.9L706.0 99.4L706.2 92.4L703.6 89.6L699.5 89.6L696.2 91.2L694.3 92.4L696.2 96.6L696.0 100.1L691.3 102.6L687.8 107.3L684.3 108.9L686.2 112.4L688.0 115.4L685.5 115.9Z"/>
<path fill="#a1d1a1" d="M729.2 121.5L732.7 121.2L736.2 120.5L737.4 122.4L738.1 121.0L737.4 117.1L736.2 118.2L735.3 116.1L737.1 114.3L733.0 113.6L731.6 111.7L728.3 110.5L729.2 113.6L727.4 115.0L729.2 118.0L729.7 119.8Z"/>
<path fill="#c8e4c8" d="M709.0 105.2L713.4 107.7L718.1 108.7L722.7 110.3L727.8 110.1L727.6 107.3L722.7 107.0L719.2 105.4L715.7 104.0L712.3 101.5L711.1 101.9Z"/>
<path fill="#e1f0e1" d="M729.5 108.7L736.7 109.6L735.8 107.3L731.1 106.6Z"/>
<path fill="#c8e4c8" d="M708.5 149.4L709.7 149.4L713.2 154.7L712.5 157.8L710.2 158.5L708.5 156.4L708.3 152.4Z"/>
<path fill="#f1f8f1" d="M737.4 122.4L738.1 121.0L739.5 118.7L739.9 116.4L742.7 113.6L743.9 110.3L746.5 108.7L749.2 106.6L752.0 108.0L752.3 112.2L749.9 116.4L754.1 120.8L755.5 124.7L751.8 126.4L750.2 128.9L749.0 132.6L751.8 135.0L751.1 137.3L753.0 141.9L752.0 148.9L751.1 141.9L749.7 133.8L748.3 133.1L744.8 135.4L742.0 135.0L741.8 128.5L740.4 126.4L738.8 124.3Z"/>
<path fill="#a1d1a1" d="M751.8 126.4L755.5 124.7L756.5 126.8L757.6 131.5L761.1 130.3L764.6 131.0L768.1 136.6L766.9 138.9L762.3 138.9L761.1 143.8L757.4 142.6L755.3 141.0L753.4 148.0L754.1 152.4L756.0 154.7L757.6 156.1L758.3 158.7L756.0 157.1L753.4 154.0L751.3 153.6L752.0 148.9L753.0 141.9L751.1 137.3L751.8 135.0L749.0 132.6L750.2 128.9Z"/>
<path fill="#e1f0e1" d="M755.5 124.7L758.1 122.4L760.4 120.1L762.3 121.7L762.0 125.0L764.6 125.7L764.4 127.3L767.4 129.2L770.4 132.6L773.0 136.1L773.0 139.6L769.3 138.9L768.1 136.6L764.6 131.0L761.1 130.3L757.6 131.5L756.5 126.8Z"/>
<path fill="#e1f0e1" d="M761.1 143.8L762.3 138.9L766.9 138.9L768.1 136.6L769.3 138.9L773.0 139.6L772.8 143.6L769.0 146.6L765.8 147.8L762.5 146.8Z"/>
<path fill="#c8e4c8" d="M760.4 120.1L764.6 119.1L770.9 119.4L773.9 121.9L770.7 124.5L768.6 128.0L770.4 131.5L773.5 134.3L776.0 137.3L776.9 141.9L776.5 145.4L773.9 147.1L771.1 148.0L767.2 152.2L766.5 149.6L765.8 147.8L769.0 146.6L772.8 143.6L773.0 139.6L773.0 136.1L770.4 132.6L767.4 129.2L764.4 127.3L764.6 125.7L762.0 125.0L762.3 121.7Z"/>
<path fill="#a1d1a1" d="M756.0 157.1L758.3 158.7L760.2 157.8L763.2 161.0L763.2 164.3L765.1 168.9L763.2 169.2L758.3 165.7L756.2 162.4L756.0 159.4Z"/>
<path fill="#a1d1a1" d="M777.6 167.8L780.9 168.7L785.6 164.8L791.4 160.8L792.5 158.2L794.9 155.9L800.2 159.9L797.2 162.2L792.1 162.9L789.3 168.7L783.2 168.7L778.6 170.1Z"/>
<path fill="#c8e4c8" d="M776.2 168.7L778.6 170.1L783.2 168.7L789.3 168.7L792.1 162.9L797.2 162.2L797.2 167.5L799.5 169.9L796.0 171.0L794.9 174.5L793.7 178.0L792.5 181.3L789.0 181.5L785.6 179.6L780.9 179.2L779.0 178.9L778.6 175.7L776.2 173.4Z"/>
<path fill="#c8e4c8" d="M744.4 159.2L749.5 160.1L752.3 163.4L756.5 167.5L758.8 168.2L764.1 174.5L765.8 178.0L769.0 179.2L769.3 182.7L769.0 185.7L765.8 185.9L760.7 181.5L757.4 176.9L753.7 171.7L752.3 168.2L748.8 165.2L745.8 162.0Z"/>
<path fill="#c8e4c8" d="M767.4 188.0L769.3 185.9L774.6 186.9L779.7 188.3L784.6 188.3L789.0 190.1L788.8 192.4L783.2 191.5L778.6 190.8L770.4 189.4Z"/>
<path fill="#c8e4c8" d="M790.2 191.0L792.5 191.5L799.5 191.7L799.5 192.9L792.5 192.9L790.2 192.2Z"/>
<path fill="#c8e4c8" d="M800.7 192.0L804.2 191.5L808.8 191.3L808.8 192.2L804.2 192.9L801.4 192.7Z"/>
<path fill="#c8e4c8" d="M811.1 193.6L818.6 191.7L813.5 195.9L810.0 196.2Z"/>
<path fill="#c8e4c8" d="M800.7 185.0L799.0 179.2L799.5 173.4L801.8 170.6L808.8 169.9L813.2 168.5L811.8 171.3L805.3 171.0L802.3 173.4L803.9 175.5L809.8 174.3L805.1 176.6L808.4 182.7L804.2 178.7L802.8 185.2Z"/>
<path fill="#c8e4c8" d="M819.3 168.0L820.5 172.7L821.6 169.2L820.5 167.1Z"/>
<path fill="#c8e4c8" d="M815.8 179.4L818.1 181.0L816.5 181.3Z"/>
<path fill="#c8e4c8" d="M820.5 179.4L826.3 179.6L825.1 180.6L820.9 180.6Z"/>
<path fill="#c8e4c8" d="M827.4 175.7L830.9 173.1L834.4 174.5L836.7 179.9L843.3 175.7L850.7 178.3L850.7 193.4L846.1 191.0L843.7 191.7L842.8 190.1L844.9 187.3L841.4 183.8L835.6 181.5L832.1 181.5L829.8 178.7L833.3 177.3L828.6 175.7Z"/>
<path fill="#e1f0e1" d="M850.7 178.3L858.9 181.0L862.3 183.8L865.8 186.2L866.5 187.8L864.7 189.7L867.0 190.8L870.5 194.3L872.8 196.6L868.2 195.7L864.7 194.3L862.3 191.3L857.7 190.1L856.1 193.1L850.7 193.4Z"/>
<path fill="#e1f0e1" d="M868.2 185.0L871.7 183.8L875.1 182.0L877.0 182.7L875.1 185.0L869.3 186.6Z"/>
<path fill="#c8e4c8" d="M803.2 129.2L807.0 129.2L806.5 132.6L805.1 137.3L806.5 139.6L811.1 141.9L808.8 140.8L803.9 139.6L801.8 135.0Z"/>
<path fill="#c8e4c8" d="M806.5 155.9L810.0 153.6L814.6 150.1L817.0 154.7L814.6 158.2L811.1 157.1Z"/>
<path fill="#c8e4c8" d="M808.8 146.6L811.1 147.8L814.6 145.4L813.5 143.1L810.0 144.3Z"/>
<path fill="#c8e4c8" d="M797.2 151.3L800.7 147.8L801.4 146.6L796.0 152.4Z"/>
<path fill="#3a8a3a" d="M788.1 223.2L786.5 228.0L786.0 232.9L787.9 237.4L790.2 243.2L791.8 250.2L790.2 252.0L797.0 253.9L801.8 251.1L810.0 251.1L813.5 248.3L822.8 246.0L828.1 245.5L834.9 248.3L838.1 253.4L840.9 249.2L843.3 248.1L842.6 253.6L844.9 255.0L847.2 257.1L850.2 260.6L856.5 262.5L863.3 263.2L867.0 260.2L871.7 259.5L874.7 251.1L877.5 246.7L879.8 238.5L878.9 230.4L873.5 224.6L869.3 219.9L862.8 215.9L860.9 209.4L857.2 204.8L854.2 197.1L852.1 202.2L852.1 208.3L850.2 212.7L846.8 212.7L842.6 209.4L837.9 207.1L840.9 200.6L839.1 199.9L832.1 198.3L827.4 200.6L825.1 202.5L823.9 206.9L820.0 205.5L815.8 204.8L812.1 210.1L807.0 213.9L804.2 217.6L798.3 219.4L794.2 220.1Z"/>
<path fill="#3a8a3a" d="M859.1 266.9L867.7 267.4L867.0 272.7L862.3 273.7L860.5 270.6Z"/>
<path fill="#a1d1a1" d="M924.5 252.2L928.7 255.5L931.9 259.0L938.0 259.9L936.6 263.4L934.2 265.3L930.3 269.0L929.1 268.3L928.9 265.0L927.0 263.4L928.9 260.6L928.2 257.4L925.2 254.1Z"/>
<path fill="#a1d1a1" d="M924.2 266.4L928.0 268.3L927.3 270.6L924.5 273.7L921.2 275.8L919.6 279.0L915.9 280.6L910.0 279.5L911.2 276.9L914.7 274.6L919.4 272.3L921.7 269.5Z"/>
<path fill="#ffffff" d="M904.2 219.2L911.2 224.1L910.7 224.6L904.2 220.1Z"/>
<path fill="#ffffff" d="M910.0 207.1L911.9 208.3L911.7 209.4L910.3 208.5Z"/>
<path fill="#ffffff" d="M887.9 190.8L892.6 192.0L892.6 193.1L887.9 192.2Z"/>
<path fill="#ffffff" d="M893.8 193.8L897.2 194.5L896.8 195.5L894.0 195.0Z"/>
<path fill="#ffffff" d="M935.2 212.9L938.0 212.7L937.5 214.6L935.2 214.1Z"/>
<path fill="#e1f0e1" d="M463.7 132.4L464.7 132.2L464.4 133.1Z"/>
<path fill="#e1f0e1" d="M467.2 136.6L468.1 136.8L467.7 137.5Z"/>
<path fill="#e1f0e1" d="M469.3 134.5L469.8 134.7L469.3 135.2Z"/>
<path fill="#5cab5c" d="M483.3 106.1L484.9 105.6L484.4 106.8Z"/>
<path fill="#5cab5c" d="M486.1 106.6L487.0 106.8L486.5 107.5Z"/>
<path fill="#5cab5c" d="M488.9 105.4L490.5 105.2L489.6 106.6Z"/>
</svg>
<svg width="50" height="125" style="position:absolute;left:0;top:0" viewBox="257 58 50 125">
  <g fill="#0a450a">
    <rect x="274" y="66" width="18" height="53" rx="9"/>
    <rect x="265" y="83" width="36" height="18" rx="9"/>
    <rect x="274" y="125" width="18" height="54" rx="9"/>
  </g>
  <g fill="#fff">
    <path d="M283 70.5 L288.2 79 L277.8 79Z"/>
    <path d="M283 114 L288.2 105.5 L277.8 105.5Z"/>
    <path d="M269 92 L277.5 86.8 L277.5 97.2Z"/>
    <path d="M297 92 L288.5 86.8 L288.5 97.2Z"/>
    <rect x="282" y="129.5" width="2" height="10"/>
    <rect x="278" y="133.5" width="10" height="2"/>
    <rect x="278" y="167.5" width="10" height="2.6"/>
  </g>
  <g fill="none" stroke="#9c9cf6" stroke-width="0.85">
    <circle cx="283" cy="152" r="8.3"/>
    <ellipse cx="283" cy="152" rx="4.6" ry="8.3"/>
    <line x1="283" y1="143.7" x2="283" y2="160.3"/>
    <line x1="274.7" y1="152" x2="291.3" y2="152"/>
    <path d="M276 147 Q283 144.5 290 147"/>
    <path d="M276 157 Q283 159.5 290 157"/>
  </g>
</svg>
</div>
<div class="a" style="left:257px;top:388px;width:150px;height:20px;background:linear-gradient(to right,#ffffff 0%,#d4ead4 25%,#9fcf9f 50%,#5aa85a 72%,#207a20 88%,#004f00 100%)"></div>
<div class="a" style="left:257px;top:388px;font-size:12px;line-height:14px;color:#111">0</div>
<div class="a" style="left:346px;top:388px;font-size:12px;line-height:14px;color:#111">72,495</div>
<div class="a" style="left:247px;top:418px;width:714px;height:1px;background:#d8d8d8"></div>

<div class="t1" style="left:267px;top:429px">Report View by Selection</div>
<div class="lnk" style="left:870px;top:429px">Customize</div>
<div class="a" style="left:247px;top:454px;width:714px;height:1px;background:#d8d8d8"></div>
<div class="a" style="left:247px;top:455px;width:709px;height:38px;background:#f3f3f3"></div>
<div class="hd" style="left:261px;top:458px">Total:</div>
<div class="hd" style="left:258px;top:474px">1231</div>
<div class="hd" style="left:341px;top:466px">Institutions</div>
<div class="hd" style="left:455px;top:466px">Countries/Regions</div>
<div class="hd" style="left:598px;top:458px">Web of Science</div>
<div class="hd" style="left:607px;top:474px">Documents</div>
<div class="hd" style="left:739px;top:466px;color:#4b7ca3">Cites</div>
<svg class="a" style="left:776px;top:471px" width="9" height="6" viewBox="0 0 9 6"><path d="M0.6 0.8 L8.2 0.8 L4.4 5Z" fill="#5288c0"/></svg>
<div class="hd" style="left:837px;top:466px">Cites/Paper</div>

<div id="body">
<div class="row" style="top:-38px;height:61px"><div class="c cr" style="right:637px">96</div><div class="c ci" style="left:79px">BEIJING<br>UNIVERSITY OF<br>CHEMICAL<br>TECHNOLOGY</div><div class="c ci" style="left:218px">CHINA<br>MAINLAND</div><div class="c cr" style="right:234px">4,806</div><div class="c cr" style="right:124px">101,912</div><div class="c cr" style="right:7px">21.21</div></div>
<div class="row" style="top:23px;height:34px"><div class="c cr" style="right:637px">97</div><div class="c ci" style="left:79px">MONASH<br>UNIVERSITY</div><div class="c ci" style="left:218px">AUSTRALIA</div><div class="c cr" style="right:234px">4,771</div><div class="c cr" style="right:124px">101,743</div><div class="c cr" style="right:7px">21.33</div></div>
<div class="row" style="top:57px;height:60px"><div class="c cr" style="right:637px">98</div><div class="c ci" style="left:79px">COMMUNAUTE<br>UNIVERSITE<br>GRENOBLE<br>ALPES</div><div class="c ci" style="left:218px">FRANCE</div><div class="c cr" style="right:234px">5,074</div><div class="c cr" style="right:124px">100,070</div><div class="c cr" style="right:7px">19.72</div></div>
<div class="row" style="top:117px;height:73px"><div class="c cr" style="right:637px">99</div><div class="c ci" style="left:79px">AGENCY FOR<br>SCIENCE<br>TECHNOLOGY &amp;<br>RESEARCH<br>(ASTAR)</div><div class="c ci" style="left:218px">SINGAPORE</div><div class="c cr" style="right:234px">3,294</div><div class="c cr" style="right:124px">100,040</div><div class="c cr" style="right:7px">30.37</div></div>
<div class="row" style="top:190px;height:34px"><div class="c cr" style="right:637px">100</div><div class="c ci" style="left:79px">HUNAN<br>UNIVERSITY</div><div class="c ci" style="left:218px">CHINA<br>MAINLAND</div><div class="c cr" style="right:234px">4,792</div><div class="c cr" style="right:124px">98,811</div><div class="c cr" style="right:7px">20.62</div></div>
<div class="row" style="top:224px;height:47px"><div class="c cr" style="right:637px">101</div><div class="c ci" style="left:79px">KING<br>ABDULAZIZ<br>UNIVERSITY</div><div class="c ci" style="left:218px">SAUDI ARABIA</div><div class="c cr" style="right:234px">4,758</div><div class="c cr" style="right:124px">98,523</div><div class="c cr" style="right:7px">20.71</div></div>
<div class="row" style="top:271px;height:34px"><div class="c cr" style="right:637px">102</div><div class="c ci" style="left:79px">UNIVERSITY OF<br>MANCHESTER</div><div class="c ci" style="left:218px">ENGLAND</div><div class="c cr" style="right:234px">4,792</div><div class="c cr" style="right:124px">98,242</div><div class="c cr" style="right:7px">20.50</div></div>
<div class="row" style="top:305px;height:34px"><div class="c cr" style="right:637px">103</div><div class="c ci" style="left:79px">TOHOKU<br>UNIVERSITY</div><div class="c ci" style="left:218px">JAPAN</div><div class="c cr" style="right:234px">6,556</div><div class="c cr" style="right:124px">97,552</div><div class="c cr" style="right:7px">14.88</div></div>
</div>
<!-- vertical scrollbar -->
<div class="a" style="left:940px;top:509px;width:17px;height:320px;background:#f1f1f1"></div>
<div class="a" style="left:944.5px;top:516px;width:0;height:0;border-left:4px solid transparent;border-right:4px solid transparent;border-bottom:4px solid #505050"></div>
<div class="a" style="left:942px;top:546px;width:13px;height:17px;background:#c1c1c1"></div>
<div class="a" style="left:944.5px;top:817px;width:0;height:0;border-left:4px solid transparent;border-right:4px solid transparent;border-top:4px solid #505050"></div>
<!-- horizontal scrollbar -->
<div class="a" style="left:247px;top:829px;width:693px;height:17px;background:#f1f1f1"></div>
<div class="a" style="left:253px;top:833px;width:0;height:0;border-top:4px solid transparent;border-bottom:4px solid transparent;border-right:4px solid #a3a3a3"></div>
<div class="a" style="left:264px;top:831px;width:562px;height:13px;background:#c1c1c1"></div>
<div class="a" style="left:930px;top:833px;width:0;height:0;border-top:4px solid transparent;border-bottom:4px solid transparent;border-left:4px solid #505050"></div>
<!-- red line -->
<div class="a" style="left:271px;top:730px;width:676px;height:3px;background:#f00000"></div>
</body></html>
